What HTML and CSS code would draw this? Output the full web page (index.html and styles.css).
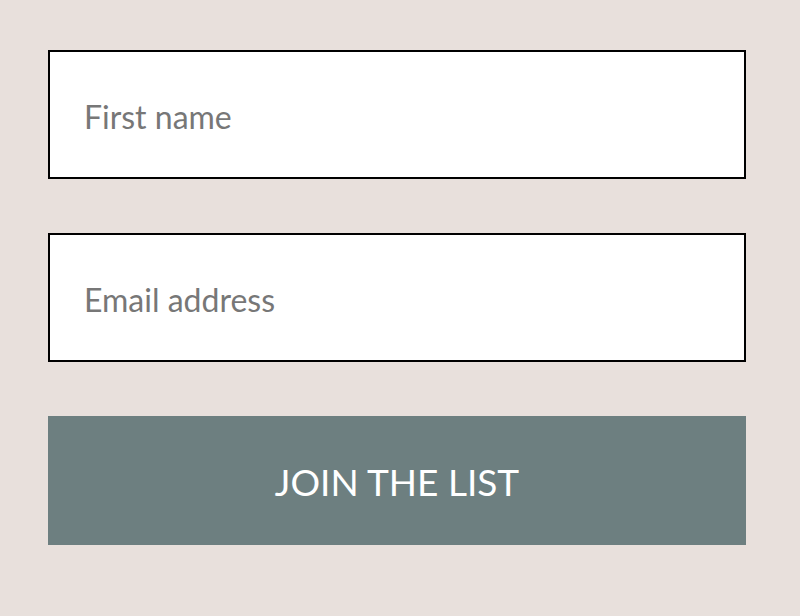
FILE: index.html
```html
<!DOCTYPE html>
<html lang="en">
<head>
    <meta charset="UTF-8">
    <meta name="viewport" content="width=device-width, initial-scale=1.0">
    <title>Join the list</title>
    <link rel="stylesheet" href="styles.css">
</head>
<body>

    <form class="signup">
        <input type="text" class="field" placeholder="First name">
        <input type="email" class="field" placeholder="Email address">
        <button type="button" class="btn-join">JOIN THE LIST</button>
    </form>

</body>
</html>
```

FILE: styles.css
```css
body {
    margin: 0;
    background: #e8e0dc;
    font-family: Lato, 'Open Sans', sans-serif;
}
.signup {
    width: 698px;
    margin: 50px 0 0 48px;
    display: flex;
    flex-direction: column;
    gap: 54px;
}
.field {
    box-sizing: border-box;
    width: 100%;
    height: 129px;
    padding: 4px 34px 0;
    border: 2px solid #000;
    background: #fff;
    font-family: inherit;
    font-size: 32px;
    color: #333;
    outline: none;
}
.field::placeholder {
    color: #777;
}
.btn-join {
    width: 100%;
    height: 129px;
    border: none;
    background: #6d7f80;
    color: #fff;
    font-family: inherit;
    font-size: 37px;
    padding-top: 2px;
    cursor: pointer;
}
```
